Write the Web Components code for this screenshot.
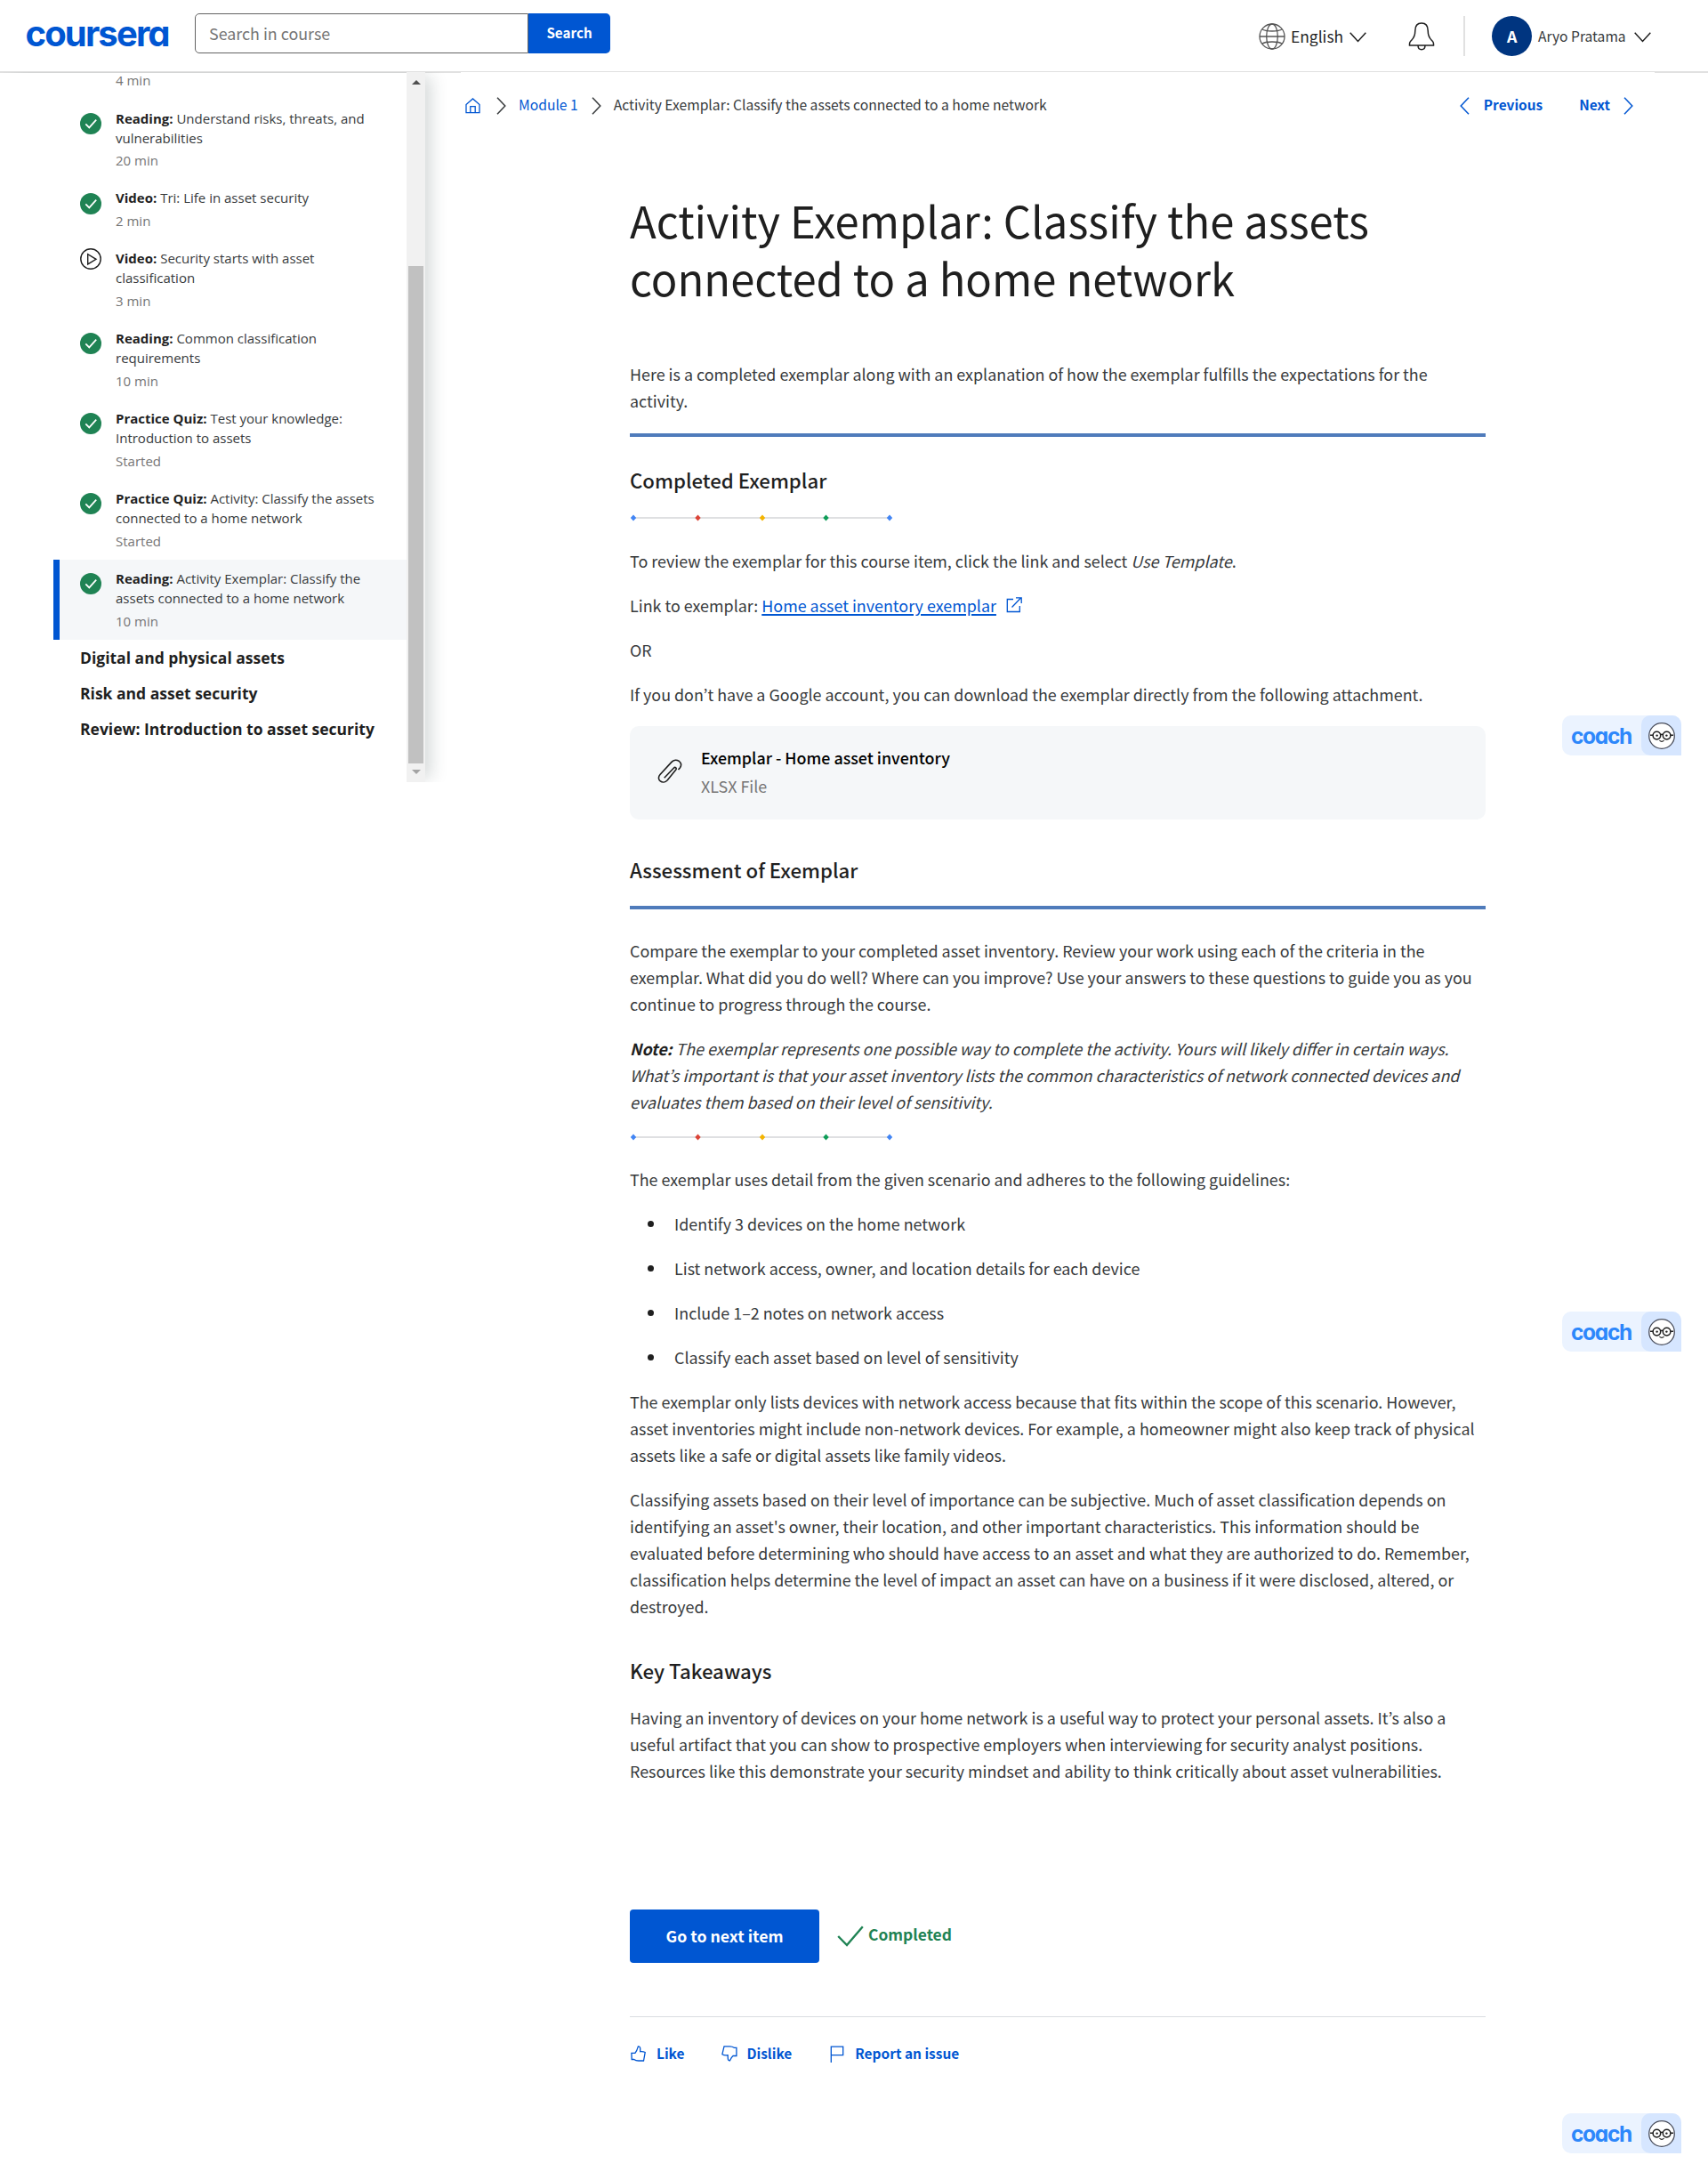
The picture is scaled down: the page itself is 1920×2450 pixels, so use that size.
<!DOCTYPE html>
<html lang="en">
<head>
<meta charset="utf-8">
<title>Activity Exemplar: Classify the assets connected to a home network | Coursera</title>
<style>
html,body{margin:0;padding:0;background:#fff}
body{width:1920px;height:2450px;overflow:hidden;font-family:"Noto Sans CJK KR","Noto Sans",sans-serif;color:#1f1f1f}
</style>
</head>
<body>
<course-page></course-page>
<script>
const define = (name, html) => {
  const tpl = document.createElement('template');
  tpl.innerHTML = html;
  customElements.define(name, class extends HTMLElement {
    constructor() {
      super();
      this.attachShadow({ mode: 'open' }).append(tpl.content.cloneNode(true));
    }
  });
};

/* ---------- icons ---------- */
const ICONS = {
  globe: ['30 30', 1.3, '<circle cx="15" cy="15" r="14"/><ellipse cx="15" cy="15" rx="6.3" ry="14"/><path d="M1 15h28M3.800 6.800q3 2.200 11.200 2.200t11.200-2.200M3.800 23.200q3-2.200 11.200-2.200t11.200 2.200"/>'],
  bell: ['30 32', 1.5, '<path d="M1.5 26v-2c0-1.800 1-2.600 2.200-3.800C6.800 17.200 7.800 15 7.800 9.500 7.800 4 10.500 1 15 1s7.200 3 7.200 8.500c0 5.500 1 7.700 4.100 10.700 1.200 1.200 2.200 2 2.200 3.800v2zM11 26.500c.2 2.800 1.700 4.200 4 4.200s3.800-1.400 4-4.200"/>'],
  down: ['19 12', 1.5, '<path d="M.7.8l8.800 9.700L18.300.8"/>'],
  right: ['11 20', 1.5, '<path d="M1 .8L9.800 10 1 19.200"/>'],
  left: ['11 20', 1.5, '<path d="M10 .8L1.200 10 10 19.200"/>'],
  home: ['17 18', 1.3, '<path d="M1 16.700V7.600L8.500.9 16 7.600v9.100zM5.800 16.700v-7h5.400v7"/>'],
  ext: ['18 18', 1.3, '<path d="M8 2.500H1.300v14h14V10M6.500 11.500L16.500 1M11 .8h6.200V7"/>'],
  clip: ['28 28', 1.6, '<path d="M7.700 21.300L18.300 10.200c1.700-1.800 4 .3 2.300 2.100L11.300 23.800c-5.200 5.700-13.300-.5-8.300-6.300L16 3.400c4.800-5.300 14 .3 9.300 6.500l-1.800 2.200"/>'],
  tick: ['30 24', 2.4, '<path d="M1.200 12l9.800 10L28.800 1.200"/>'],
  like: ['17 18', 1.3, '<path d="M5 8.300H.9l.3 7.200h2.500c1.500 1.200 3 1.500 5 1.500h5.800l1.700-9.500c-1.500-.8-3.200-1-5.500-.8V3.200c0-1.600-1-2.500-2.300-2.300C7.500 4 6.700 6.500 5 8.300z"/>'],
  dislike: ['18 18', 1.3, '<path d="M13 11.500h3.900V2.300h-2.700C12.700 1.200 11.500.9 9.500.9H3L.9 9.700c1.500 1 3.500 1.300 6.200 1l.2 3.800c0 1.600.9 2.500 2.200 2.300 1-2.300 1.700-3.900 3.500-5.300z"/>'],
  flag: ['16 19', 1.3, '<path d="M1.300 19V1.100h13.400v9.600H1.300"/>'],
  done: ['24 24', 1.7, '<circle cx="12" cy="12" r="12" fill="#1f8354" stroke="none"/><path stroke="#fff" d="M6.300 12.300l4 4.100 7.900-8.800"/>'],
  play: ['24 24', 1.4, '<circle cx="12" cy="12" r="11.200"/><path d="M8.700 6.700v11.200l9.300-5.600z"/>'],
  face: ['30 30', 1.3, '<circle cx="15" cy="15" r="14.300" fill="#fff" stroke="#4a4e5c"/><g stroke="#1f1f1f" stroke-width="1.500"><circle cx="9.400" cy="14.600" r="4.300"/><circle cx="20.600" cy="14.600" r="4.300"/><path d="M13.500 13.700q1.500-1 3 0M2 14.200h3.100M24.900 14.200H28" /><path stroke-width="1.100" d="M12.400 20.200q2.600 2.400 5.200 0"/></g><circle cx="9.600" cy="14.600" r="1.200" fill="#1f1f1f" stroke="none"/><circle cx="20.400" cy="14.600" r="1.200" fill="#1f1f1f" stroke="none"/>']
};
customElements.define('c-icon', class extends HTMLElement {
  connectedCallback() {
    const [size, sw, body] = ICONS[this.getAttribute('name')];
    const [w, h] = size.split(' ');
    this.attachShadow({ mode: 'open' }).innerHTML =
      `<style>:host{display:block;flex:none;width:${w}px;height:${h}px}svg{display:block}</style>
       <svg width="${w}" height="${h}" viewBox="0 0 ${w} ${h}" fill="none" stroke="currentColor" stroke-width="${sw}">${body}</svg>`;
  }
});

/* ---------- header ---------- */
define('site-header', `<style>
:host{display:flex;box-sizing:border-box;height:82px;border-bottom:2px solid #e1e1e1;align-items:flex-start;white-space:nowrap}
.logo{width:189px;box-sizing:border-box;padding-left:28.500px;font:700 40px/50px Inter,sans-serif;font-feature-settings:"cv11";letter-spacing:-1.85px;color:#0056d2;margin-top:13px}
.search{display:flex;margin-left:30px;margin-top:15px;height:45px}
.field{box-sizing:border-box;width:375px;border:1px solid #636363;border-radius:5px 0 0 5px;padding-left:15px;font-size:17.85px;line-height:43px;color:#757575}
.btn{width:92px;background:#0056d2;border-radius:0 5px 5px 0;color:#fff;font-weight:700;font-size:15.2px;line-height:43px;text-align:center}
.tools{display:flex;align-items:center;margin-left:auto;height:81px;width:505px}
.lang{font-size:17.4px;margin-left:6px;color:#1f1f1f}
.tools c-icon[name=down]{margin-top:2px}
.av{width:45px;height:45px;border-radius:50%;background:#003580;color:#fff;font-weight:700;font-size:17.8px;line-height:45px;text-align:center;margin-left:30px}
.sep{width:2px;height:45px;background:#e1e1e1;margin-left:32px}
.name{font-size:15.6px;margin-left:7px;margin-top:-2px;color:#373a3c}
</style>
<div class="logo">coursera</div>
<div class="search"><div class="field">Search in course</div><div class="btn">Search</div></div>
<div class="tools"><c-icon name="globe" style="color:#555"></c-icon><span class="lang">English</span><c-icon name="down" style="margin-left:7px"></c-icon>
<c-icon name="bell" style="margin-left:47px"></c-icon><i class="sep"></i><div class="av">A</div><span class="name">Aryo Pratama</span><c-icon name="down" style="margin-left:9px"></c-icon></div>`);

/* ---------- side navigation ---------- */
customElements.define('nav-item', class extends HTMLElement {
  connectedCallback() {
    const icon = this.getAttribute('icon') || 'done';
    const active = this.hasAttribute('active');
    this.attachShadow({ mode: 'open' }).innerHTML = `<style>
:host{display:flex;align-items:flex-start;box-sizing:border-box;padding:10px 0 9.6px 23px;border-left:7px solid ${active ? '#0056d2' : 'transparent'};background:${active ? '#f5f7f9' : 'none'};background-clip:padding-box;line-height:22.5px;white-space:nowrap}
c-icon{margin:${icon === 'play' ? '.3px' : '5.2px'} 16px 0 0;color:#1f1f1f}
.sub{color:#757575;margin-top:2.9px}
.t{color:#373a3c}
b{font-weight:700;color:#1f1f1f}
</style><c-icon name="${icon}"></c-icon><div><div class="t"><b>${this.getAttribute('kind')}:</b> <slot></slot></div><div class="sub">${this.getAttribute('meta')}</div></div>`;
  }
});
define('side-nav', `<style>
:host{display:flex;width:478px;height:797px;font-family:"Open Sans",sans-serif;font-size:15px;flex:none;box-shadow:10px 0 18px -4px rgba(40,60,60,.2);clip-path:inset(-1px -40px 0 0)}
.list{box-sizing:border-box;width:457px;padding-left:60px;height:797px}
.first{margin:0 0 12.500px 70px;line-height:17px;color:#757575}
h3{margin:0 0 0 30px;font-size:17.5px;font-weight:700;line-height:40px;white-space:nowrap}
.bar{display:flex;flex-direction:column;width:21px;height:798px;margin-top:-1px;background:#f1f1f1;align-items:center;box-sizing:border-box;padding:9px 0}
.thumb{width:17px;height:559px;background:#c1c1c1;margin:204px 0 7px}
.bar svg{display:block}
</style>
<div class="list"><div class="first">4 min</div>
<nav-item kind="Reading" meta="20 min">Understand risks, threats, and<br>vulnerabilities</nav-item>
<nav-item kind="Video" meta="2 min">Tri: Life in asset security</nav-item>
<nav-item kind="Video" meta="3 min" icon="play">Security starts with asset<br>classification</nav-item>
<nav-item kind="Reading" meta="10 min">Common classification<br>requirements</nav-item>
<nav-item kind="Practice Quiz" meta="Started">Test your knowledge:<br>Introduction to assets</nav-item>
<nav-item kind="Practice Quiz" meta="Started">Activity: Classify the assets<br>connected to a home network</nav-item>
<nav-item kind="Reading" meta="10 min" active>Activity Exemplar: Classify the<br>assets connected to a home network</nav-item>
<h3>Digital and physical assets</h3><h3>Risk and asset security</h3><h3>Review: Introduction to asset security</h3></div>
<div class="bar"><svg width="10" height="5"><path d="M0 5L5 0l5 5z" fill="#505050"/></svg><div class="thumb"></div><svg width="10" height="5"><path d="M0 0l5 5 5-5z" fill="#a3a3a3"/></svg></div>`);

/* ---------- article pieces ---------- */
define('crumb-bar', `<style>
:host{display:flex;align-items:center;height:30px;font-size:15.67px;color:#373a3c;white-space:nowrap;padding:23px 24px 0 5px}
.b{color:#0056d2}.end{margin-left:auto;display:flex;align-items:center;color:#0056d2;font-weight:700;font-size:15.4px}
span{line-height:30px;margin-top:-3px}
.end span{margin-top:-4px}
</style>
<c-icon class="b" name="home"></c-icon><c-icon name="right" style="margin:0 14px 0 18px"></c-icon><span class="b">Module 1</span><c-icon name="right" style="margin:0 14px 0 15px"></c-icon><span>Activity Exemplar: Classify the assets connected to a home network</span>
<div class="end"><c-icon name="left"></c-icon><span style="margin-left:16px">Previous</span><span style="margin-left:41px">Next</span><c-icon name="right" style="margin-left:15px"></c-icon></div>`);

define('dot-rule', `<style>:host{display:block;width:296px;height:20px}svg{display:block}</style>
<svg width="296" height="20"><path d="M4 10h288" stroke="#d4d6d9" stroke-width="1.500"/>
<path d="M4 6.500l3.200 3.500L4 13.500.8 10zM292 6.500l3.200 3.500-3.200 3.500-3.200-3.500z" fill="#4285f4"/><path d="M76.500 6.500l3.200 3.500-3.200 3.500-3.200-3.500z" fill="#db4437"/><path d="M149 6.500l3.200 3.500-3.200 3.500-3.200-3.500z" fill="#f4b400"/><path d="M220.500 6.500l3.200 3.500-3.200 3.500-3.200-3.500z" fill="#0f9d58"/></svg>`);

define('file-card', `<style>
:host{display:flex;align-items:center;box-sizing:border-box;height:105px;border-radius:10px;background:#f5f7f9;padding-left:31px;margin-top:21px}
.x{margin:-3px 0 0 21px}.a{font-weight:500;font-size:17.83px;line-height:32px;color:#000}.s{font-size:17.9px;line-height:32px;color:#757575}
</style><c-icon name="clip" style="margin-top:-4px"></c-icon><div class="x"><div class="a"><slot></slot></div><div class="s"><slot name="type"></slot></div></div>`);

define('item-feedback', `<style>
:host{display:flex;align-items:center;border-top:1px solid #dadce0;padding-top:26px;color:#0056d2;font-weight:700;font-size:15.45px;line-height:32px;white-space:nowrap}
span{margin:-2px 0 0 12px}
</style><c-icon name="like" style="margin-left:1px"></c-icon><span>Like</span><c-icon name="dislike" style="margin-left:42px"></c-icon><span style="margin-left:10px">Dislike</span><c-icon name="flag" style="margin-left:43px"></c-icon><span>Report an issue</span>`);

define('coach-tab', `<style>
:host{position:absolute;left:1756px;display:flex;width:134px;height:45px;border-radius:10px 10px 0 10px;overflow:hidden;background:#ebf3ff}
.c{width:89px;box-sizing:border-box;padding-left:10px;font:700 24.5px/46px Inter,sans-serif;font-feature-settings:"cv11";letter-spacing:-1.3px;color:#2d87fb}
.f{display:flex;width:45px;align-items:center;justify-content:center;background:#d6e6ff;border-radius:10px 0 0 10px}
</style><div class="c">coach</div><div class="f"><c-icon name="face"></c-icon></div>`);

define('course-article', `<style>
:host{display:block;width:962px;margin:80px 0 0 190px;font-size:17.9px;line-height:30px;white-space:nowrap}
h1{margin:0 0 61px;font-size:48.95px;line-height:65px;font-weight:400}
p{margin:0 0 20px}
h2{margin:0;font-size:22.2px;font-weight:500;line-height:30px}
hr{margin:0;border:0;height:4px;background:#4f7bbb}
a{color:#0056d2;text-decoration:underline;text-decoration-thickness:2px;text-underline-offset:2px}
ul{margin:0 0 20px;padding:0;list-style:none}
li{display:flex;align-items:center;margin-bottom:20px}
li::before{content:"";width:7px;height:7px;border-radius:50%;background:#1f1f1f;margin:0 23px 0 20px}
.act{display:flex;align-items:center;margin:141px 0 60px;height:60px}
.go{width:213px;height:60px;border-radius:4px;background:#0056d2;color:#fff;font-weight:700;font-size:17.7px;line-height:59px;text-align:center}
.ok{color:#1f8354;font-weight:700;font-size:17.4px;margin:-5px 0 0 5px}
.inl{display:flex;align-items:center}
.txt{color:#373a3c}
</style>
<h1>Activity Exemplar: Classify the assets<br>connected to a home network</h1>
<div class="txt"><p style="margin-bottom:22px">Here is a completed exemplar along with an explanation of how the exemplar fulfills the expectations for the<br>activity.</p></div>
<hr>
<h2 style="margin:33px 0 18px">Completed Exemplar</h2>
<dot-rule></dot-rule>
<div class="txt"><p style="margin-top:23px">To review the exemplar for this course item, click the link and select <i>Use Template</i>.</p>
<p class="inl"><span>Link to exemplar: <a>Home asset inventory exemplar</a></span><c-icon name="ext" style="margin:0 0 0 11px;color:#0056d2"></c-icon></p>
<p>OR</p>
<p style="margin:0">If you don’t have a Google account, you can download the exemplar directly from the following attachment.</p></div>
<file-card>Exemplar - Home asset inventory<span slot="type">XLSX File</span></file-card>
<h2 style="margin:41px 0 26px">Assessment of Exemplar</h2>
<hr>
<div class="txt"><p style="margin-top:31px">Compare the exemplar to your completed asset inventory. Review your work using each of the criteria in the<br>exemplar. What did you do well? Where can you improve? Use your answers to these questions to guide you as you<br>continue to progress through the course.</p>
<p style="margin-bottom:15px"><i><b style="color:#1f1f1f">Note:</b> The exemplar represents one possible way to complete the activity. Yours will likely differ in certain ways.<br>What’s important is that your asset inventory lists the common characteristics of network connected devices and<br>evaluates them based on their level of sensitivity.</i></p>
<dot-rule></dot-rule>
<p style="margin-top:22px">The exemplar uses detail from the given scenario and adheres to the following guidelines:</p>
<ul><li>Identify 3 devices on the home network</li><li>List network access, owner, and location details for each device</li><li>Include 1–2 notes on network access</li><li>Classify each asset based on level of sensitivity</li></ul>
<p>The exemplar only lists devices with network access because that fits within the scope of this scenario. However,<br>asset inventories might include non-network devices. For example, a homeowner might also keep track of physical<br>assets like a safe or digital assets like family videos.</p>
<p>Classifying assets based on their level of importance can be subjective. Much of asset classification depends on<br>identifying an asset's owner, their location, and other important characteristics. This information should be<br>evaluated before determining who should have access to an asset and what they are authorized to do. Remember,<br>classification helps determine the level of impact an asset can have on a business if it were disclosed, altered, or<br>destroyed.</p></div>
<h2 style="margin:42px 0 23px">Key Takeaways</h2>
<div class="txt"><p style="margin:0">Having an inventory of devices on your home network is a useful way to protect your personal assets. It’s also a<br>useful artifact that you can show to prospective employers when interviewing for security analyst positions.<br>Resources like this demonstrate your security mindset and ability to think critically about asset vulnerabilities.</p></div>
<div class="act"><div class="go">Go to next item</div><c-icon name="tick" style="margin-left:20px;color:#1f8354"></c-icon><span class="ok">Completed</span></div>
<item-feedback></item-feedback>`);

define('course-page', `<style>
:host{display:block;position:relative;height:2450px;background:#fff}
.row{display:flex;align-items:flex-start}
main{width:1342px;margin:-1px 0 0 40px;background:#fff}
</style>
<site-header></site-header>
<div class="row"><side-nav></side-nav><main><crumb-bar></crumb-bar><course-article></course-article></main></div>
<coach-tab style="top:804px"></coach-tab><coach-tab style="top:1474px"></coach-tab><coach-tab style="top:2375px"></coach-tab>`);
</script>
</body>
</html>
